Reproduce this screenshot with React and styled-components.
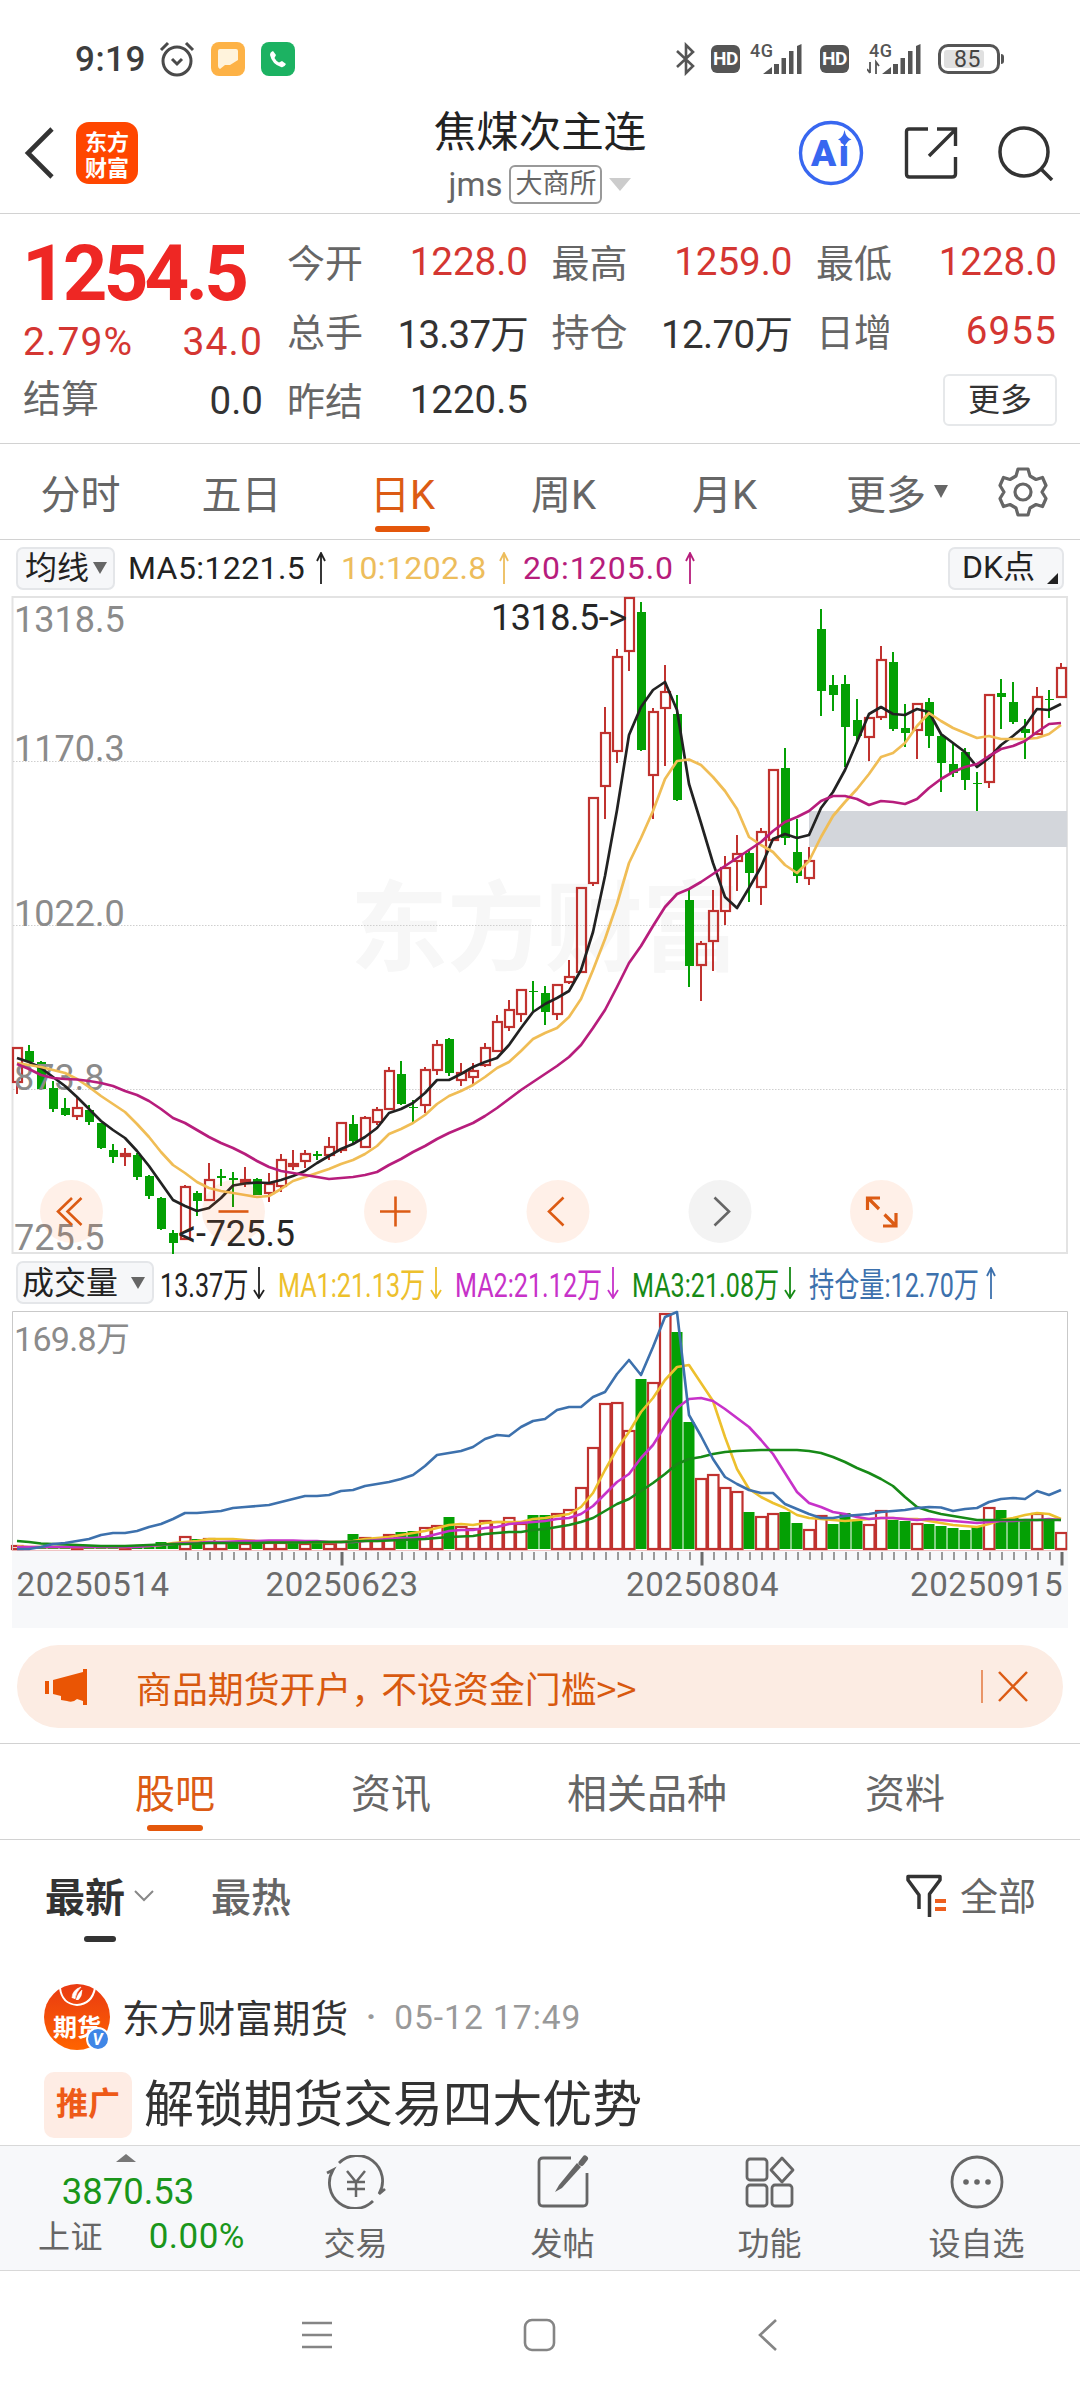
import React from 'react';
import styled, { createGlobalStyle } from 'styled-components';

const RED = '#c0322f';
const GREEN = '#04a004';

// [colour, high, body top, body bottom, low]
const candles = [
  ['r', 1048, 1048, 1082, 1094], ['g', 1045, 1051, 1062, 1062], ['g', 1061, 1062, 1089, 1089], ['g', 1081, 1088, 1109, 1112],
  ['g', 1098, 1108, 1115, 1116], ['r', 1097, 1108, 1116, 1120], ['g', 1105, 1110, 1122, 1125], ['g', 1123, 1123, 1148, 1149],
  ['g', 1144, 1150, 1157, 1163], ['r', 1148, 1154, 1156, 1166], ['g', 1153, 1155, 1177, 1180], ['g', 1175, 1176, 1196, 1199],
  ['g', 1197, 1198, 1229, 1230], ['g', 1230, 1233, 1243, 1254], ['r', 1185, 1187, 1239, 1239], ['g', 1191, 1193, 1201, 1216],
  ['r', 1163, 1180, 1200, 1200], ['g', 1169, 1176, 1178, 1186], ['g', 1172, 1178, 1180, 1207], ['r', 1167, 1180, 1182, 1187],
  ['g', 1178, 1179, 1195, 1195], ['r', 1173, 1184, 1193, 1202], ['r', 1154, 1160, 1186, 1192], ['r', 1150, 1164, 1166, 1170],
  ['r', 1150, 1154, 1161, 1168], ['g', 1151, 1154, 1156, 1160], ['r', 1137, 1147, 1155, 1160], ['r', 1122, 1123, 1150, 1153],
  ['g', 1115, 1124, 1141, 1145], ['r', 1116, 1118, 1147, 1148], ['r', 1107, 1110, 1122, 1125], ['r', 1067, 1071, 1109, 1109],
  ['g', 1061, 1074, 1104, 1105], ['g', 1100, 1107, 1108, 1122], ['r', 1067, 1070, 1105, 1113], ['r', 1040, 1045, 1070, 1075],
  ['g', 1038, 1039, 1073, 1076], ['r', 1063, 1073, 1080, 1086], ['r', 1063, 1071, 1077, 1085], ['r', 1043, 1048, 1065, 1067],
  ['r', 1015, 1022, 1051, 1052], ['r', 1000, 1010, 1027, 1031], ['r', 989, 990, 1014, 1022], ['g', 981, 991, 992, 1012],
  ['g', 986, 993, 1012, 1025], ['r', 985, 985, 1014, 1020], ['r', 960, 977, 982, 984], ['r', 887, 888, 972, 972],
  ['r', 797, 798, 883, 886], ['r', 707, 733, 786, 819], ['r', 649, 657, 751, 763], ['r', 598, 598, 651, 671],
  ['g', 602, 612, 750, 751], ['r', 708, 712, 775, 819], ['r', 665, 692, 708, 766], ['g', 695, 714, 800, 801],
  ['g', 889, 900, 966, 987], ['r', 941, 944, 965, 1001], ['r', 890, 911, 941, 971], ['r', 856, 868, 911, 925],
  ['r', 835, 854, 861, 891], ['g', 849, 853, 873, 902], ['r', 828, 832, 887, 905], ['r', 769, 770, 840, 840],
  ['g', 748, 768, 838, 845], ['g', 819, 852, 876, 883], ['r', 847, 861, 878, 885], ['g', 609, 629, 691, 716],
  ['g', 675, 685, 695, 711], ['g', 675, 684, 727, 767], ['g', 699, 720, 736, 741], ['r', 717, 718, 737, 761],
  ['r', 646, 660, 717, 720], ['g', 652, 662, 729, 731], ['g', 704, 728, 733, 747], ['r', 703, 704, 730, 759],
  ['g', 698, 702, 736, 748], ['g', 735, 736, 763, 792], ['g', 744, 764, 773, 777], ['g', 748, 752, 780, 790],
  ['g', 772, 783, 784, 811], ['r', 694, 695, 782, 788], ['g', 679, 693, 697, 729], ['g', 682, 702, 722, 724],
  ['g', 719, 729, 733, 759], ['r', 687, 697, 734, 734], ['g', 690, 699, 700, 718], ['r', 663, 668, 697, 697],
];

const ma5 = [1058, 1062, 1068, 1077, 1086, 1097, 1109, 1121, 1130, 1138, 1151, 1166, 1183, 1200, 1206, 1211, 1208, 1198, 1185.5, 1183.5, 1182.5, 1183, 1180, 1176, 1171, 1163, 1156, 1149, 1144, 1137, 1128, 1113, 1109, 1103, 1093, 1080, 1080, 1074, 1067, 1062, 1058, 1045, 1028, 1012, 1004, 998, 991, 970, 932, 876, 810, 735, 707, 690, 682, 710, 784, 823, 863, 897, 908, 888, 867, 839, 834, 838, 835, 808, 792, 770, 742, 714, 707, 714, 715, 709, 712, 734, 743, 752, 767, 758, 745, 736, 726, 709, 710, 704];
const ma10 = [1063, 1065, 1067, 1070, 1073, 1079, 1087, 1096, 1104, 1112, 1124, 1137, 1152, 1165, 1173, 1182, 1188, 1191, 1193, 1195, 1197, 1196, 1189, 1181, 1177, 1173, 1169, 1164, 1160, 1154, 1146, 1134, 1129, 1123, 1115, 1104, 1096, 1091, 1085, 1077, 1068, 1062, 1051, 1039, 1033, 1028, 1017, 999, 970, 939, 904, 863, 838, 811, 779, 761, 759.5, 765, 777, 791, 809, 837, 845, 852, 865, 873, 861, 837, 816, 802, 789, 774, 757, 753, 743, 726, 713, 721, 728, 733, 738, 736, 739, 739, 739, 738, 734, 725];
const ma20 = [1064, 1069, 1075, 1078, 1079, 1079.5, 1081, 1083, 1086, 1091, 1095, 1101, 1109, 1118, 1123, 1130, 1137, 1143, 1148, 1154, 1161, 1167, 1171, 1173, 1175, 1177, 1179, 1178, 1177, 1175, 1172, 1165, 1159, 1152, 1146, 1139, 1133, 1128, 1123, 1116, 1108, 1099, 1090, 1082, 1074, 1066, 1057, 1045, 1028, 1010, 987, 963, 946, 926, 907, 894, 889, 882, 874, 866, 858, 850, 842, 831, 822, 817, 811, 801, 796, 796, 799, 805, 801, 802, 804, 799, 788, 779, 772, 767, 764, 756, 749, 746, 741, 732, 724, 723];

// [colour, top]
const volumes = [
  ['r', 1545], ['g', 1547], ['g', 1547], ['g', 1547], ['g', 1547], ['r', 1547], ['g', 1547], ['g', 1546], ['g', 1546], ['r', 1547],
  ['g', 1546], ['g', 1546], ['g', 1542], ['g', 1544], ['r', 1536], ['g', 1539], ['r', 1538], ['r', 1542], ['g', 1542], ['r', 1543],
  ['g', 1542], ['r', 1542], ['r', 1542], ['g', 1542], ['r', 1543], ['g', 1543], ['r', 1543], ['r', 1541], ['g', 1534], ['r', 1537],
  ['r', 1540], ['r', 1534], ['g', 1532], ['g', 1531], ['r', 1527], ['r', 1525], ['g', 1517], ['r', 1526], ['r', 1528], ['r', 1520],
  ['r', 1521], ['r', 1517], ['r', 1523], ['g', 1515], ['g', 1515], ['r', 1513], ['r', 1509], ['r', 1487], ['r', 1447], ['r', 1403],
  ['r', 1402], ['r', 1430], ['g', 1379], ['r', 1382], ['r', 1313], ['g', 1332], ['g', 1422], ['r', 1478], ['r', 1474], ['r', 1487],
  ['r', 1491], ['g', 1512], ['r', 1516], ['r', 1513], ['g', 1512], ['g', 1523], ['r', 1529], ['r', 1515], ['g', 1524], ['g', 1513],
  ['g', 1521], ['r', 1524], ['r', 1510], ['g', 1520], ['g', 1521], ['r', 1523], ['g', 1524], ['g', 1526], ['g', 1528], ['g', 1530],
  ['g', 1527], ['r', 1507], ['g', 1510], ['g', 1518], ['g', 1521], ['r', 1513], ['g', 1521], ['r', 1532],
];

const vol5 = [1546, 1547, 1547, 1547, 1547, 1547, 1547, 1547, 1547, 1547, 1546, 1546, 1545, 1543, 1542, 1541, 1539, 1539, 1539, 1540, 1541, 1542, 1542, 1542, 1542, 1542, 1542, 1542, 1541, 1539, 1538, 1537, 1535, 1533, 1531, 1528, 1525, 1524, 1525, 1523, 1522, 1522, 1522, 1519, 1518, 1516, 1514, 1507, 1493, 1470, 1449, 1432, 1412, 1398, 1380, 1367, 1365, 1383, 1401, 1437, 1469, 1489, 1497, 1503, 1508, 1515, 1518, 1519, 1520, 1521, 1520, 1519, 1518, 1518, 1519, 1519, 1521, 1523, 1525, 1526, 1527, 1524, 1520, 1518, 1515, 1513, 1514, 1519];
const vol10 = [1547, 1547, 1547, 1547, 1547, 1547, 1547, 1547, 1547, 1547, 1547, 1546, 1545, 1544, 1543, 1543, 1542, 1542, 1541.5, 1541, 1541, 1540.5, 1540.5, 1540.5, 1541, 1541, 1542, 1542, 1542, 1541, 1540, 1539, 1538, 1538, 1537, 1534, 1531, 1530, 1530, 1528, 1527, 1524, 1523, 1522, 1521, 1519, 1518, 1514, 1506, 1494, 1482, 1474, 1458, 1445, 1426, 1408, 1399, 1398, 1401, 1409, 1418, 1427, 1440, 1454, 1473, 1492, 1503, 1507, 1512, 1514, 1517, 1519, 1518, 1518, 1519, 1520, 1519, 1520, 1521, 1522, 1523, 1522, 1521, 1521, 1520, 1520, 1519, 1520];
const vol20 = [1541, 1542, 1543.5, 1544, 1544.5, 1545, 1545.5, 1546, 1546, 1546, 1545.5, 1545, 1544.5, 1544, 1544, 1543.5, 1543, 1543, 1543, 1543, 1543, 1542.5, 1542.5, 1542.5, 1542.5, 1542, 1542, 1542, 1541.5, 1541, 1541, 1540.5, 1540, 1539.5, 1539, 1538, 1537, 1536.5, 1536, 1534, 1533, 1532, 1532, 1530, 1529, 1527, 1525, 1522, 1518, 1511, 1504, 1499, 1491, 1483, 1474, 1464, 1459, 1457, 1454, 1452, 1451, 1450.5, 1450, 1450, 1450, 1450, 1451, 1453, 1457, 1462, 1468, 1473, 1479, 1486, 1497, 1507, 1511, 1514, 1516, 1518, 1520, 1520, 1520, 1520, 1520, 1520, 1520, 1520];
const holding = [1549, 1549, 1547, 1544, 1543, 1541, 1539, 1535, 1533, 1533, 1531, 1527, 1524, 1519, 1513, 1513, 1512, 1511, 1508, 1507, 1506, 1505, 1502, 1499, 1496, 1496, 1495, 1491, 1490, 1486, 1484, 1482, 1479, 1475, 1466, 1455, 1453, 1451, 1447, 1439, 1435, 1436, 1427, 1421, 1419, 1410, 1407, 1407, 1397, 1392, 1374, 1360, 1375, 1347, 1317, 1312, 1415, 1436, 1459, 1477, 1484, 1490, 1493, 1493, 1504, 1509, 1514, 1518, 1518, 1516, 1515, 1514, 1512, 1511, 1510, 1508, 1507, 1507.5, 1511, 1509, 1508, 1502, 1499, 1498, 1499, 1491, 1495, 1490];

const cx = (i) => 17 + i * 12;
const toPoints = (list) => list.map((y, i) => `${cx(i)},${y}`).join(' ');

const Candle = ({ i, data }) => {
  const [tone, high, top, bottom, low] = data;
  const x = cx(i);
  const h = Math.max(bottom - top, 1);
  if (tone === 'g') {
    return (
      <g fill={GREEN}>
        <rect x={x - 1} y={high} width="2" height={low - high} />
        <rect x={x - 4} y={top} width="9" height={h} />
      </g>
    );
  }
  return (
    <g fill={RED}>
      <rect x={x - 1} y={high} width="2" height={Math.max(top - high, 0)} />
      <rect x={x - 1} y={bottom} width="2" height={Math.max(low - bottom, 0)} />
      <rect x={x - 4} y={top} width="9" height={h} fill="none" stroke={RED} strokeWidth="2.2" />
    </g>
  );
};

const PriceChart = () => (
  <Chart width="1080" height="658" viewBox="0 596 1080 658">
    <text x="350" y="963" fontSize="98" fontWeight="700" fill="#f7f7f7" textLength="390">东方财富</text>
    <rect x="12.5" y="597" width="1054.5" height="656" fill="none" stroke="#e3e3e3" strokeWidth="2" />
    {[761.5, 925.5, 1089.5].map((y) => (
      <line key={y} x1="13" x2="1067" y1={y} y2={y} stroke="#cfcfcf" strokeDasharray="1.5 1.5" />
    ))}
    <rect x="809" y="811" width="258" height="36" fill="#d3d6db" />
    {candles.map((c, i) => <Candle key={i} i={i} data={c} />)}
    <g fill="#8b8b8b" fontSize="36">
      <text x="14" y="632">1318.5</text>
      <text x="14" y="761">1170.3</text>
      <text x="14" y="926">1022.0</text>
      <text x="14" y="1089.5">873.8</text>
      <text x="14" y="1249.5">725.5</text>
    </g>
    <g fill="none" strokeWidth="2.7" strokeLinejoin="round">
      <polyline points={toPoints(ma5)} stroke="#222" />
      <polyline points={toPoints(ma10)} stroke="#f0bd55" />
      <polyline points={toPoints(ma20)} stroke="#b71d7c" />
    </g>
    <g fill="#262626" fontSize="36">
      <text x="491" y="630" textLength="136">1318.5-&gt;</text>
      <text x="178" y="1246" textLength="117">&lt;-725.5</text>
    </g>
    {[71.5, 233.5, 395.5, 558, 881.5].map((x) => (
      <circle key={x} cx={x} cy="1211.5" r="31.5" fill="#ff6a1c" fillOpacity="0.1" />
    ))}
    <circle cx="720" cy="1211.5" r="31.5" fill="#888" fillOpacity="0.1" />
    <g fill="none" stroke="#dc5b14" strokeWidth="2.6">
      <path d="M72 1198 L58 1211.5 L72 1225 M81.5 1198 L67.5 1211.5 L81.5 1225" />
      <path d="M218.5 1211.5 H248.5" />
      <path d="M380 1211.5 H410.5 M395.5 1196.5 V1226.5" />
      <path d="M563.5 1197.5 L549 1211.5 L563.5 1225.5" />
      <path d="M714.5 1197.5 L729 1211.5 L714.5 1225.5" stroke="#666" />
      <path d="M867.5 1210 V1198 H880 M868 1198 L879 1209 M884.5 1214.5 L896 1226 M883 1226 H896 V1213" strokeWidth="3.2" />
    </g>
  </Chart>
);

const VolumeChart = () => (
  <Chart width="1080" height="317" viewBox="0 1311 1080 317">
    <rect x="12" y="1551" width="1056" height="77" fill="#f7f8fa" />
    <line x1="12" x2="1067" y1="1550.5" y2="1550.5" stroke="#f0c4c4" />
    {volumes.map(([tone, top], i) => (tone === 'g'
      ? <rect key={i} x={cx(i) - 5.5} y={top} width="11" height={1549 - top} fill={GREEN} />
      : <rect key={i} x={cx(i) - 5} y={top + 1} width="10.5" height={Math.max(1548 - top, 0.5)} fill="#fff" stroke={RED} strokeWidth="2.2" />
    ))}
    <path d="M12.5 1550 V1311.5 H1067.5 V1550" fill="none" stroke="#c9c9c9" />
    <g fill="none" strokeWidth="2.6" strokeLinejoin="round">
      <polyline points={toPoints(vol5)} stroke="#edc02d" />
      <polyline points={toPoints(vol10)} stroke="#c732c9" />
      <polyline points={toPoints(vol20)} stroke="#178a17" />
      <polyline points={toPoints(holding)} stroke="#3d71ad" />
    </g>
    {volumes.map((v, i) => {
      if (i < 14) return null;
      const major = i === 27 || i === 57 || i === 87;
      return (
        <rect
          key={i}
          x={cx(i) + (major ? -0.5 : 0)}
          y="1552"
          width={major ? 3 : 2}
          height={major ? 13.5 : 8}
          fill={major ? '#6b6b6b' : '#9a9a9a'}
        />
      );
    })}
    <text x="14" y="1351" fontSize="34" fill="#8b8b8b" textLength="116">169.8万</text>
    <g fontSize="33" fill="#6b6b6b">
      <text x="16.5" y="1595.5" textLength="152.5">20250514</text>
      <text x="265.5" y="1595.5" textLength="152.5">20250623</text>
      <text x="626" y="1595.5" textLength="152.5">20250804</text>
      <text x="910" y="1595.5" textLength="152.5">20250915</text>
    </g>
  </Chart>
);

const Arrow = ({ down }) => (
  <svg width="12" height="32" viewBox="0 0 12 32" fill="none" stroke="currentColor" strokeWidth="1.8">
    {down ? <path d="M6 0 V31 M1 23 L6 31 L11 23" /> : <path d="M6 32 V1 M2 9 L6 1 L10 9" />}
  </svg>
);

const Signal = ({ data }) => (
  <svg width="57" height="36" viewBox="0 0 57 36" fill="#555">
    <text x="2" y="16" fontSize="18" fontWeight="500" textLength="23">4G</text>
    {data && <path d="M3 32 V21 M3 32 L0 28 M9 33 V21 L12 25" stroke="#555" strokeWidth="1.8" fill="none" />}
    <path d="M15 33 L24 26 V33 Z M26 23 h5 V33 h-5 Z M33.5 17 h4.5 V33 h-4.5 Z M41 10 h4.5 V33 h-4.5 Z M49 5 l4.5 -2 V33 h-4.5 Z" />
  </svg>
);

const quoteCells = [
  { label: '今开', value: '1228.0', up: true },
  { label: '最高', value: '1259.0', up: true },
  { label: '最低', value: '1228.0', up: true },
  { label: '总手', value: '13.37万', spacing: -0.8 },
  { label: '持仓', value: '12.70万', spacing: -0.6 },
  { label: '日增', value: '6955', up: true, spacing: 1.2 },
  { label: '昨结', value: '1220.5' },
];

const volumeStats = [
  { text: '13.37万', color: '#222', width: 93, down: true, gap: 8 },
  { text: 'MA1:21.13万', color: '#edc02d', width: 152, down: true, gap: 8 },
  { text: 'MA2:21.12万', color: '#c732c9', width: 152, down: true, gap: 8 },
  { text: 'MA3:21.08万', color: '#178a17', width: 152, down: true, gap: 8 },
  { text: '持仓量:12.70万', color: '#3d71ad', width: 176, gap: 0 },
];

const App = () => (
  <>
    <GlobalStyle />
    <Screen>
      <StatusBar>
        <Clock>9:19</Clock>
        <svg width="36" height="36" viewBox="0 0 36 36" fill="none" stroke="#4a4a4a" strokeWidth="3">
          <circle cx="18" cy="20" r="14" />
          <path d="M2 9 L9 2 M34 9 L27 2 M13 18 L18 23 L23 18" strokeWidth="3" />
        </svg>
        <AppBadge $bg="#fdb246">
          <svg width="20" height="22" viewBox="0 0 20 22">
            <path d="M2 1 H18 Q20 1 20 3 V12 L12 17 H7 L2 21 Q0 20 0 18 V3 Q0 1 2 1" fill="#fff3dc" />
          </svg>
        </AppBadge>
        <AppBadge $bg="#1cb262">
          <svg width="18" height="18" viewBox="0 0 18 18">
            <path d="M4 1 L7 5 L5.5 8 Q7 11 10 12.5 L13 11 L17 14 Q15 18 12 17 Q3 14 1 5 Q1 2 4 1" fill="#fff" />
          </svg>
        </AppBadge>
        <StatusRight>
          <svg width="22" height="34" viewBox="0 0 22 34" fill="none" stroke="#555" strokeWidth="2.6">
            <path d="M2 9 L18 24 L11 31 V3 L18 10 L2 25" />
          </svg>
          <Hd $left={14} $right={8}>HD</Hd>
          <Signal />
          <Hd $left={15} $right={18}>HD</Hd>
          <Signal data />
          <Battery><span>85</span></Battery>
        </StatusRight>
      </StatusBar>

      <Header>
        <svg width="32" height="56" viewBox="0 0 32 56" fill="none" stroke="#333" strokeWidth="4.6">
          <path d="M30 4 L6 28 L30 52" />
        </svg>
        <Logo><span>东方</span><span>财富</span></Logo>
        <Title>
          <h1>焦煤次主连</h1>
          <div><span>jms</span><em>大商所</em><Triangle $w={11} $h={13} $color="#ccc" /></div>
        </Title>
        <HeaderIcons>
          <svg width="66" height="66" viewBox="0 0 66 66">
            <circle cx="33" cy="33" r="30.5" fill="none" stroke="#3867f0" strokeWidth="3.4" />
            <text x="13" y="46" fontSize="37" fontWeight="900" fill="#3867f0" textLength="38">Ai</text>
            <path d="M46.5 10 Q48 18 53.5 19.5 Q48 21 46.5 28 Q45 21 40 19.500 Q45 18 46.5 10" fill="#3867f0" />
          </svg>
          <svg width="54" height="54" viewBox="0 0 54 54" fill="none" stroke="#333" strokeWidth="3.4">
            <path d="M24 3 H5 Q2.5 3 2.5 5.5 V48 Q2.5 51 5.5 51 H48 Q51.5 51 51.5 48 V31 M33 3 H51.5 V20 M51 4 L25 30" />
          </svg>
          <svg width="56" height="56" viewBox="0 0 56 56" fill="none" stroke="#333" strokeWidth="3.5">
            <circle cx="26" cy="27" r="24" /><path d="M43 44 L54 55" />
          </svg>
        </HeaderIcons>
      </Header>

      <Quote>
        <Summary>
          <strong>1254.5</strong>
          <SummaryRow><b>2.79%</b><b>34.0</b></SummaryRow>
          <SummaryRow $last><i>结算</i><span>0.0</span></SummaryRow>
        </Summary>
        <QuoteGrid>
          {quoteCells.map((c) => (
            <Cell key={c.label} $up={c.up} $spacing={c.spacing}><i>{c.label}</i><span>{c.value}</span></Cell>
          ))}
          <More>更多</More>
        </QuoteGrid>
      </Quote>

      <Periods>
        {['分时', '五日', '日K', '周K', '月K'].map((t) => <Period key={t} $active={t === '日K'}>{t}</Period>)}
        <MorePeriod>更多<Triangle $w={7} $h={13} $color="#666" /></MorePeriod>
        <svg width="50" height="50" viewBox="0 0 50 50" fill="none" stroke="#666" strokeWidth="3.2" strokeLinejoin="round">
          <path d="M20 2 H30 L32 9 L38 12.5 L44.5 10.5 L48 18.5 L44 25 L48 31.5 L44.5 39.5 L38 37.5 L32 41 L30 48 H20 L18 41 L12 37.5 L5.5 39.5 L2 31.5 L6 25 L2 18.5 L5.5 10.5 L12 12.5 L18 9 Z" />
          <circle cx="25" cy="25" r="8" />
        </svg>
      </Periods>

      <Indicators>
        <Chip $w={99}>均线<Triangle $w={7} $h={12} $color="#666" /></Chip>
        <Ma $w={199} $left={13} $spacing={0.4} $color="#222"><span>MA5:1221.5</span><Arrow /></Ma>
        <Ma $w={169} $left={14} $spacing={0.4} $color="#edbd5c"><span>10:1202.8</span><Arrow /></Ma>
        <Ma $w={173} $left={13} $spacing={1} $color="#b71d7c"><span>20:1205.0</span><Arrow /></Ma>
        <Chip $w={116} $right>DK点<Corner /></Chip>
      </Indicators>
      <PriceChart />

      <Indicators $volume>
        <Chip $w={138} $wide>成交量<Triangle $w={7} $h={12} $color="#666" /></Chip>
        {volumeStats.map((s) => (
          <Stat key={s.text} $color={s.color} $w={s.width} $gap={s.gap}>
            <Squeeze>{s.text}</Squeeze>
            <Arrow down={s.down} />
          </Stat>
        ))}
      </Indicators>
      <VolumeChart />

      <Promo>
        <svg width="42" height="36" viewBox="0 0 42 36" fill="#ea5504">
          <path d="M0 12 H4 V25 H0 Z M8 11 L38 3 V0 H42 V36 H38 V32 L32 30 Q28 34 22 32 L16 31 V27 L8 25 Z" />
        </svg>
        <p>商品期货开户<span>，</span>不设资金门槛&gt;&gt;</p>
        <svg width="48" height="36" viewBox="0 0 48 36" fill="none" stroke="#dc5b14">
          <path d="M1 1 V34" strokeWidth="1.2" /><path d="M18 3 L46 32 M46 3 L18 32" strokeWidth="2.5" />
        </svg>
      </Promo>

      <Sections>
        <Section $left={135} $active>股吧</Section>
        <Section $left={136}>资讯</Section>
        <Section $left={136}>相关品种</Section>
        <Section $left={138}>资料</Section>
      </Sections>

      <Feed>
        <Sorts>
          <Sort $active>最新</Sort>
          <svg width="22" height="14" viewBox="0 0 22 14" fill="none" stroke="#888" strokeWidth="2"><path d="M2 2 L11 11 L20 2" /></svg>
          <Sort>最热</Sort>
          <Filter>
            <svg width="42" height="44" viewBox="0 0 42 44" fill="none" stroke="#333" strokeWidth="3.5" strokeLinejoin="round">
              <path d="M13 35 V21 L2 6 V2.5 H34 V6 L23.5 20 V43" />
              <path d="M29 27 H40 M29 35 H40" stroke="#ee5f1e" strokeWidth="4" />
            </svg>
            <span>全部</span>
          </Filter>
        </Sorts>
        <Author>
          <svg width="68" height="68" viewBox="0 0 68 68">
            <defs>
              <linearGradient id="avatar" x1="0" y1="0" x2="0" y2="1">
                <stop offset="0" stopColor="#e93a12" />
                <stop offset="1" stopColor="#ff6400" />
              </linearGradient>
            </defs>
            <circle cx="33" cy="34" r="33" fill="url(#avatar)" />
            <path d="M16 5 Q18 21 33 22 Q48 21 51 5" fill="none" stroke="#fff" strokeWidth="2" />
            <path d="M28 15 Q28 7 37 4 Q32 9 31 16 M32 17 Q34 10 38 7 Q38 14 34 17" fill="#fff" stroke="#fff" strokeWidth="0.6" />
            <text x="9" y="53" fontSize="24" fontWeight="700" fill="#fff" textLength="48">期货</text>
            <circle cx="54" cy="56" r="11" fill="#3f86e6" stroke="#fff" strokeWidth="2" />
            <text x="48.5" y="62" fontSize="16" fontWeight="700" fontStyle="italic" fill="#fff">V</text>
          </svg>
          <span>东方财富期货</span>
          <Dot>·</Dot>
          <time>05-12 17:49</time>
        </Author>
        <Post><Tag>推广</Tag><h2>解锁期货交易四大优势</h2></Post>
      </Feed>

      <Dock>
        <IndexBox>
          <svg width="20" height="8" viewBox="0 0 20 8"><path d="M0 8 L10 0 L20 8 Z" fill="#777" /></svg>
          <b>3870.53</b>
          <div><span>上证</span><em>0.00%</em></div>
        </IndexBox>
        <DockItem>
          <svg width="62" height="54" viewBox="0 0 62 54" fill="none" stroke="#666" strokeWidth="2.8">
            <path d="M14 8 A25.5 25.5 0 0 1 54 39 L60 34 M48 46 A25.5 25.5 0 0 1 8 15 L2 18" />
            <path d="M22 16 L31 27 L40 16 M31 27 V42 M22 27 H40 M22 34 H40" strokeWidth="2.5" />
          </svg>
          交易
        </DockItem>
        <DockItem>
          <svg width="54" height="54" viewBox="0 0 54 54" fill="none" stroke="#666" strokeWidth="2.8">
            <path d="M35 3 H7 Q3 3 3 7 V47 Q3 51 7 51 H47 Q51 51 51 47 V18" />
            <path d="M19 37 L23 30 L41 8 L45 12 L26 33 Z" fill="#666" stroke="none" />
            <path d="M45.500 8 L49 3.500" strokeWidth="6" strokeLinecap="round" />
          </svg>
          发帖
        </DockItem>
        <DockItem>
          <svg width="54" height="54" viewBox="0 0 54 54" fill="none" stroke="#666" strokeWidth="2.8">
            <rect x="4" y="4" width="20" height="21" rx="3" /><rect x="4" y="30" width="20" height="21" rx="3" />
            <rect x="29" y="30" width="20" height="21" rx="3" /><path d="M39 3 L50 15 L39 27 L28 15 Z" strokeLinejoin="round" />
          </svg>
          功能
        </DockItem>
        <DockItem>
          <svg width="54" height="54" viewBox="0 0 54 54" fill="none" stroke="#666" strokeWidth="2.8">
            <circle cx="27" cy="27" r="25" />
            <g fill="#666" stroke="none"><circle cx="16" cy="27" r="2.8" /><circle cx="27" cy="27" r="2.8" /><circle cx="38" cy="27" r="2.8" /></g>
          </svg>
          设自选
        </DockItem>
      </Dock>

      <SystemNav>
        <svg width="32" height="34" viewBox="0 0 32 34" stroke="#858585" strokeWidth="2.6"><path d="M1 5 H31 M1 17 H31 M1 29 H31" /></svg>
        <svg width="34" height="34" viewBox="0 0 34 34" fill="none" stroke="#858585" strokeWidth="2.6"><rect x="2" y="2" width="29" height="30" rx="7" /></svg>
        <svg width="20" height="34" viewBox="0 0 20 34" fill="none" stroke="#858585" strokeWidth="2.6"><path d="M18 2 L2 17 L18 32" /></svg>
      </SystemNav>
    </Screen>
  </>
);

const GlobalStyle = createGlobalStyle`
  * {
    box-sizing: border-box;
  }

  body {
    margin: 0;
    background: #fff;
    font-family: Roboto, "Noto Sans CJK SC", sans-serif;
  }

  h1, h2, p {
    margin: 0;
    font-weight: 400;
  }

  i, em {
    font-style: normal;
  }

  svg {
    display: block;
    flex: none;
  }
`;

const Screen = styled.main`
  width: 1080px;
  height: 2400px;
  overflow: hidden;
  background: #fff;
  color: #333;
  white-space: nowrap;
`;

const StatusBar = styled.div`
  display: flex;
  align-items: center;
  height: 100px;
  padding: 18px 74px 0 75px;
`;

const Clock = styled.span`
  width: 84px;
  font-size: 35px;
  font-weight: 500;
  letter-spacing: 0.5px;
  color: #3d3d3d;
`;

const AppBadge = styled.span`
  display: flex;
  justify-content: center;
  align-items: center;
  width: 34px;
  height: 34px;
  margin-left: 16px;
  border-radius: 8px;
  background: ${(p) => p.$bg};
`;

const StatusRight = styled.div`
  display: flex;
  align-items: center;
  margin-left: auto;
`;

const Hd = styled.span`
  width: 29px;
  height: 28px;
  margin: 0 ${(p) => p.$right}px 0 ${(p) => p.$left}px;
  border-radius: 6px;
  background: #555;
  color: #fff;
  font-size: 19px;
  font-weight: 700;
  line-height: 28px;
  letter-spacing: -0.5px;
  text-align: center;
`;

const Battery = styled.div`
  position: relative;
  width: 62px;
  height: 30px;
  margin: 0 6px 0 14px;
  padding: 3px;
  border: 3px solid #555;
  border-radius: 10px;

  span {
    display: block;
    width: 40px;
    height: 18px;
    padding-left: 10px;
    border-radius: 3px;
    background: #e0e0e0;
    color: #444;
    font-size: 23px;
    line-height: 19px;
    letter-spacing: 0.5px;
  }

  &::after {
    content: '';
    position: absolute;
    top: 7px;
    right: -7px;
    width: 3px;
    height: 10px;
    border-radius: 0 3px 3px 0;
    background: #555;
  }
`;

const Header = styled.header`
  display: flex;
  align-items: center;
  height: 114px;
  padding: 0 26px 8px 22px;
  border-bottom: 1px solid #d2d2d2;
`;

const Logo = styled.div`
  display: flex;
  flex-direction: column;
  justify-content: center;
  align-items: center;
  width: 62px;
  height: 62px;
  margin-left: 22px;
  border-radius: 13px;
  background: #ff4600;
  color: #fff;
  font-family: "Noto Sans CJK SC", sans-serif;
  font-size: 22px;
  font-weight: 700;
  line-height: 26px;
`;

const Title = styled.div`
  flex: 1;
  padding: 7px 0 0 144px;

  h1 {
    color: #222;
    font-size: 42.5px;
    line-height: 50px;
    text-align: center;
  }

  div {
    display: flex;
    justify-content: center;
    align-items: center;
    gap: 7px;
    padding: 7px 0 0 0;
    color: #666;
    font-size: 33px;
    line-height: 40px;
  }

  em {
    height: 39px;
    padding: 0 4px;
    border: 2px solid #999;
    border-radius: 6px;
    font-size: 27px;
    line-height: 34px;
  }
`;

const Triangle = styled.i`
  border: ${(p) => p.$w}px solid transparent;
  border-top: ${(p) => p.$h}px solid ${(p) => p.$color};
  border-bottom: 0;
`;

const HeaderIcons = styled.div`
  display: flex;
  align-items: center;
  gap: 40px;
`;

const Quote = styled.section`
  display: flex;
  gap: 24px;
  height: 230px;
  padding: 13px 23px 0 23px;
  border-bottom: 1px solid #d2d2d2;
  font-size: 38.5px;

  i {
    position: relative;
    top: -1.5px;
    color: #666;
    font-size: 38px;
  }
`;

const Summary = styled.div`
  width: 241px;

  strong {
    display: block;
    height: 81px;
    margin-left: -1px;
    color: #ee2724;
    font-size: 78px;
    font-weight: 700;
    line-height: 94px;
    letter-spacing: -3.9px;
  }
`;

const SummaryRow = styled.div`
  display: flex;
  justify-content: space-between;
  height: 69px;
  margin-top: ${(p) => (p.$last ? -11 : 0)}px;
  line-height: 69px;

  b {
    color: #d43632;
    font-size: 39px;
    font-weight: 400;
    letter-spacing: 1.1px;
  }
`;

const QuoteGrid = styled.div`
  display: grid;
  grid-template-columns: repeat(3, 241px);
  grid-auto-rows: 69px;
  gap: 0 23.5px;
`;

const Cell = styled.div`
  display: flex;
  justify-content: space-between;
  align-items: center;

  span {
    color: ${(p) => (p.$up ? '#d43632' : '#333')};
    letter-spacing: ${(p) => p.$spacing || 0}px;
  }
`;

const More = styled.button`
  grid-column: 3;
  align-self: center;
  justify-self: end;
  width: 114px;
  height: 52px;
  padding: 0;
  border: 2px solid #e6e8ea;
  border-radius: 6px;
  background: #fff;
  color: #333;
  font: inherit;
  font-size: 32px;
  line-height: 46px;
`;

const Periods = styled.nav`
  display: flex;
  align-items: center;
  height: 96px;
  padding: 0 32px 0 0;
  border-bottom: 1px solid #d2d2d2;
  color: #666;
  font-size: 40px;

  svg {
    margin-left: auto;
  }
`;

const Period = styled.div`
  position: relative;
  width: 161px;
  color: ${(p) => (p.$active ? '#dc5b14' : '#666')};
  text-align: center;

  &::after {
    content: '';
    display: ${(p) => (p.$active ? 'block' : 'none')};
    position: absolute;
    left: 53px;
    bottom: -11px;
    width: 55px;
    height: 6px;
    border-radius: 3px;
    background: #e4570b;
  }
`;

const MorePeriod = styled.div`
  display: flex;
  align-items: center;
  gap: 8px;
  padding-left: 41px;
`;

const Indicators = styled.div`
  display: flex;
  align-items: center;
  height: ${(p) => (p.$volume ? 57 : 56)}px;
  padding: 0 16px;
`;

const Chip = styled.div`
  position: relative;
  display: flex;
  justify-content: ${(p) => (p.$wide ? 'space-between' : 'flex-start')};
  align-items: center;
  gap: 4px;
  width: ${(p) => p.$w}px;
  height: 43px;
  margin-left: ${(p) => (p.$right ? 'auto' : 0)};
  padding: ${(p) => (p.$wide ? '0 7px 0 4px' : p.$right ? '0 0 3px 12px' : '0 0 0 7px')};
  border: 2px solid #e4e6e9;
  border-radius: 7px;
  background: #f6f7f9;
  color: #222;
  font-size: 32px;
  line-height: 38px;
`;

const Corner = styled.i`
  position: absolute;
  right: 4px;
  bottom: 4px;
  border-left: 11px solid transparent;
  border-bottom: 11px solid #222;
`;

const Ma = styled.div`
  display: flex;
  justify-content: space-between;
  align-items: center;
  width: ${(p) => p.$w}px;
  margin-left: ${(p) => p.$left}px;
  color: ${(p) => p.$color};
  font-size: 32px;
  letter-spacing: ${(p) => p.$spacing}px;
`;

const Stat = styled.div`
  display: flex;
  justify-content: space-between;
  align-items: center;
  width: ${(p) => p.$w + 12}px;
  margin: 0 ${(p) => p.$gap - 1}px 0 6px;
  color: ${(p) => p.$color};
  font-size: 34px;
`;

const Squeeze = styled.span`
  width: 0;
  transform: scaleX(0.74);
  transform-origin: left;
`;

const Chart = styled.svg`
  overflow: visible;
  font-family: Roboto, "Noto Sans CJK SC", sans-serif;
`;

const Promo = styled.div`
  display: flex;
  align-items: center;
  height: 83px;
  margin: 17px 17px 15px;
  padding: 0 34px 0 28px;
  border-radius: 42px;
  background: #fcece3;

  p {
    flex: 1;
    padding-left: 49px;
    color: #d8590f;
    font-family: "Noto Sans CJK SC", sans-serif;
    font-size: 35.9px;
  }

  span {
    margin-right: -6px;
  }
`;

const Sections = styled.nav`
  display: flex;
  align-items: center;
  height: 97px;
  padding-bottom: 1px;
  border: solid #d2d2d2;
  border-width: 1px 0;
`;

const Section = styled.div`
  position: relative;
  margin-left: ${(p) => p.$left}px;
  color: ${(p) => (p.$active ? '#dc5b14' : '#666')};
  font-size: 40px;

  &::after {
    content: '';
    display: ${(p) => (p.$active ? 'block' : 'none')};
    position: absolute;
    left: 12px;
    bottom: -11px;
    width: 56px;
    height: 6px;
    border-radius: 3px;
    background: #e4570b;
  }
`;

const Feed = styled.section`
  height: 305px;
  padding: 20px 44px 0;
`;

const Sorts = styled.div`
  display: flex;
  align-items: center;
  height: 72px;
  padding-left: 1px;

  > svg {
    margin: 0 56px 0 8px;
  }
`;

const Sort = styled.div`
  position: relative;
  padding-bottom: 2px;
  color: ${(p) => (p.$active ? '#333' : '#666')};
  font-size: 40px;
  font-weight: ${(p) => (p.$active ? 700 : 500)};

  &::after {
    content: '';
    display: ${(p) => (p.$active ? 'block' : 'none')};
    position: absolute;
    left: 39px;
    bottom: -16px;
    width: 32px;
    height: 6px;
    border-radius: 3px;
    background: #333;
  }
`;

const Filter = styled.div`
  display: flex;
  align-items: center;
  gap: 12px;
  margin-left: auto;
  color: #666;
  font-size: 38px;

  span {
    padding-bottom: 5px;
  }
`;

const Author = styled.div`
  display: flex;
  align-items: center;
  height: 68px;
  margin-top: 51px;
  color: #333;
  font-size: 37.7px;

  > span {
    margin-left: 10px;
    padding-bottom: 4px;
  }

  time {
    color: #999;
    font-size: 33.5px;
    letter-spacing: 1px;
  }
`;

const Dot = styled.b`
  width: 46px;
  color: #999;
  font-weight: 500;
  text-align: center;
`;

const Post = styled.div`
  display: flex;
  align-items: center;
  height: 66px;
  margin-top: 21px;

  h2 {
    margin-left: 12px;
    color: #333;
    font-size: 49.8px;
    line-height: 66px;
  }
`;

const Tag = styled.span`
  width: 88px;
  height: 66px;
  border-radius: 10px;
  background: #feece4;
  color: #ee5a18;
  font-size: 32px;
  font-weight: 700;
  line-height: 64px;
  text-align: center;
`;

const Dock = styled.footer`
  display: flex;
  height: 126px;
  border: solid #d8d8d8;
  border-width: 1px 0;
  background: #f7f8fa;
`;

const IndexBox = styled.div`
  display: flex;
  flex-direction: column;
  align-items: center;
  width: 252px;
  padding-top: 8px;
  color: #1a961a;
  font-size: 36.5px;

  b {
    margin: 7px 0 0 4px;
    font-weight: 400;
    line-height: 46px;
  }

  div {
    display: flex;
    justify-content: space-between;
    align-self: stretch;
    padding: 0 7px 0 38px;
    font-size: 35px;
    line-height: 44px;
    letter-spacing: 0.5px;
  }

  span {
    color: #666;
    font-size: 32px;
  }
`;

const DockItem = styled.div`
  display: flex;
  flex-direction: column;
  align-items: center;
  width: 207px;
  padding-top: 9px;
  color: #666;
  font-size: 32px;
  line-height: 70px;
`;

const SystemNav = styled.div`
  display: flex;
  align-items: center;
  height: 128px;
  padding-left: 301px;

  svg + svg {
    margin-left: 190px;
  }

  svg + svg + svg {
    margin-left: 201px;
  }
`;

export default App;
